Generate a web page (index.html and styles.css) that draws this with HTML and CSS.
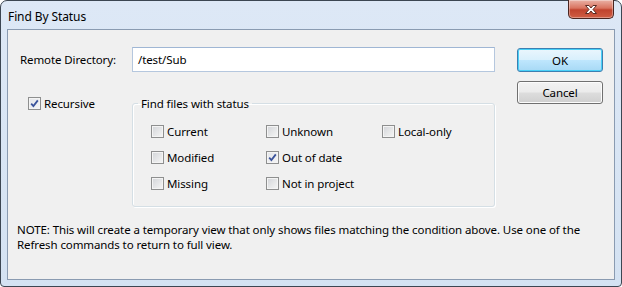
FILE: index.html
```html
<!DOCTYPE html>
<html>
<head>
<meta charset="utf-8">
<title>Find By Status</title>
<link rel="stylesheet" href="styles.css">
</head>
<body>
<div class="window">
  <div class="titlebar">
    <span class="title">Find By Status</span>
    <span class="close">
      <svg width="18" height="11" viewBox="0 0 18 11">
        <path d="M3.5 1.5 H7 L9 4 L11 1.5 H14.5 L11 5.5 L14.5 9.5 H11 L9 7 L7 9.5 H3.5 L7 5.5 Z" fill="#fff" stroke="#5a2a22" stroke-width="1" stroke-linejoin="round"/>
      </svg>
    </span>
  </div>
  <div class="client">
    <div class="top">
      <div class="left">
        <div class="row1">
          <label class="dirlabel">Remote Directory:</label>
          <div class="input">/test/Sub</div>
        </div>
        <div class="row2">
          <div class="reccol">
            <span class="check">
              <span class="box checked"><svg width="9" height="9" viewBox="0 0 9 9"><path d="M1.2 4.6 L3.4 7 L7.8 1.4" fill="none" stroke="#3a539b" stroke-width="1.8"/></svg></span>
              <span>Recursive</span>
            </span>
          </div>
          <fieldset class="group">
            <legend>Find files with status</legend>
            <div class="grid">
              <span class="check"><span class="box"></span><span>Current</span></span>
              <span class="check"><span class="box"></span><span>Unknown</span></span>
              <span class="check"><span class="box"></span><span>Local-only</span></span>
              <span class="check"><span class="box"></span><span>Modified</span></span>
              <span class="check"><span class="box checked"><svg width="9" height="9" viewBox="0 0 9 9"><path d="M1.2 4.6 L3.4 7 L7.8 1.4" fill="none" stroke="#3a539b" stroke-width="1.8"/></svg></span><span>Out of date</span></span>
              <span class="check empty"></span>
              <span class="check"><span class="box"></span><span>Missing</span></span>
              <span class="check"><span class="box"></span><span>Not in project</span></span>
            </div>
          </fieldset>
        </div>
      </div>
      <div class="buttons">
        <button class="btn default">OK</button>
        <button class="btn">Cancel</button>
      </div>
    </div>
    <p class="note">NOTE: This will create a temporary view that only shows files matching the condition above. Use one of the Refresh commands to return to full view.</p>
  </div>
</div>
</body>
</html>
```
FILE: styles.css
```css
html, body {
  margin: 0;
  padding: 0;
  background: #ffffff;
}
body {
  font-family: "Segoe UI", "Noto Sans", "Open Sans", sans-serif;
  font-size: 11.5px;
  letter-spacing: -0.1px;
  color: #000;
}
.window {
  position: relative;
  width: 622px;
  height: 287px;
  box-sizing: border-box;
  border: 1px solid #3c4652;
  border-radius: 7px 7px 4px 4px;
  background: linear-gradient(#dde8f6, #d4e2f2);
  display: flex;
  flex-direction: column;
}
.titlebar {
  height: 28px;
  display: flex;
  align-items: center;
  padding-left: 7px;
  flex: none;
}
.title {
  line-height: 15px;
  margin-top: 2px;
  font-size: 12px;
}
.close {
  position: absolute;
  top: -1px;
  right: 7px;
  width: 44px;
  height: 18px;
  border: 1px solid #4a2520;
  border-top: none;
  border-radius: 0 0 5px 5px;
  background: linear-gradient(#eab2a6 0%, #d9735f 45%, #c0432e 55%, #cf5d43 100%);
  box-shadow: inset 0 0 0 1px rgba(255,255,255,0.35);
  display: flex;
  align-items: center;
  justify-content: center;
}
.close svg { display: block; margin-top: 1px; }
.client {
  flex: 1;
  margin: 0 6px 6px 6px;
  border: 1px solid #8a9bb1;
  background: #f0f0f0;
}
.top {
  display: flex;
  padding-top: 17px;
}
.left {
  width: 487px;
}
.row1 {
  display: flex;
  align-items: center;
}
.dirlabel {
  width: 124px;
  box-sizing: border-box;
  padding-left: 12px;
}
.input {
  width: 363px;
  height: 25px;
  box-sizing: border-box;
  border: 1px solid #b5c7de;
  border-top-color: #9fb6d4;
  background: #fff;
  padding-left: 5px;
  line-height: 23px;
}
.row2 {
  display: flex;
  margin-top: 24px;
}
.reccol {
  width: 124px;
  box-sizing: border-box;
  padding-left: 20px;
}
.check {
  display: flex;
  align-items: center;
  height: 15px;
  line-height: 15px;
}
.box {
  width: 13px;
  height: 13px;
  box-sizing: border-box;
  border: 1px solid #8e8f8f;
  background: linear-gradient(135deg, #d2d4d8 0%, #e8e9ea 60%, #f6f6f6 100%);
  box-shadow: inset 0 0 0 1px #f4f4f4;
  margin-right: 3px;
  flex: none;
  display: flex;
  align-items: center;
  justify-content: center;
}
.box.checked {
  background: linear-gradient(135deg, #e4e6ea 0%, #f4f4f5 100%);
}
.box svg { display: block; }
.group {
  width: 363px;
  box-sizing: border-box;
  margin: 0;
  padding: 0 0 10px 0;
  border: 1px solid #d5dfe5;
  border-radius: 3px;
  box-shadow: inset 1px 1px 0 #fff, 1px 1px 0 #fff;
}
.group legend {
  padding: 0 3px;
  margin-left: 5px;
  line-height: 15px;
}
.grid {
  display: grid;
  grid-template-columns: 115px 116px auto;
  grid-auto-rows: 26px;
  margin-left: 18px;
  margin-top: 7px;
  align-items: center;
}
.buttons {
  margin-left: 22px;
  display: flex;
  flex-direction: column;
  width: 86px;
}
.btn {
  font: inherit;
  letter-spacing: inherit;
  color: #000;
  width: 86px;
  height: 23px;
  padding: 0;
  border: 1px solid #707070;
  border-radius: 3px;
  background: linear-gradient(#f2f2f2 0%, #ebebeb 48%, #dddddd 52%, #cfcfcf 100%);
  box-shadow: inset 0 0 0 1px #fcfcfc;
  line-height: 19px;
}
.btn.default {
  margin-top: 1px;
  margin-bottom: 9px;
  height: 24px;
  border-color: #3c7fb1;
  background: linear-gradient(#eaf6fd 0%, #d9f0fc 48%, #bee6fd 52%, #a7d9f5 100%);
  box-shadow: inset 0 0 0 1px #48d0f7;
}
.note {
  margin: 15px 0 0 0;
  padding-left: 9px;
  width: 590px;
  box-sizing: border-box;
  line-height: 15px;
}
```
